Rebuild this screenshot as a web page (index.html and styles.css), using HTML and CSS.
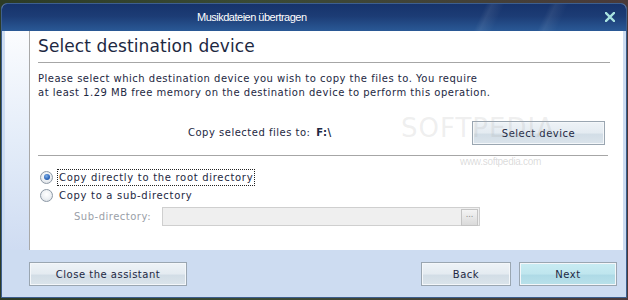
FILE: index.html
```html
<!DOCTYPE html>
<html>
<head>
<meta charset="utf-8">
<link rel="stylesheet" href="styles.css">
</head>
<body>
<div class="window">
  <div class="titlebar">
    <span class="title">Musikdateien übertragen</span>
    <svg class="close" width="10" height="10" viewBox="0 0 10 10"><path d="M1 1 L9 9 M9 1 L1 9" stroke="#a8e2e0" stroke-width="2.4" stroke-linecap="square"/></svg>
  </div>
  <div class="client">
    <div class="upper">
      <div class="strip"></div>
      <div class="panel">
        <h1 class="heading">Select destination device</h1>
        <p class="desc">Please select which destination device you wish to copy the files to. You require<br>at least 1.29 MB free memory on the destination device to perform this operation.</p>
        <div class="target-row">
          <span class="target-label">Copy selected files to: <b class="drive">F:\</b></span>
          <button class="btn btn-select">Select device</button>
        </div>
        <div class="sep"></div>
        <label class="radio-row"><span class="radio checked"></span><span class="focus">Copy directly to the root directory</span></label>
        <label class="radio-row"><span class="radio"></span><span class="radio-text">Copy to a sub-directory</span></label>
        <div class="sub-row">
          <span class="sub-label">Sub-directory:</span>
          <div class="sub-input"><span class="browse">...</span></div>
        </div>
        <div class="wm">SOFTPEDIA</div>
        <div class="wm-url">www.softpedia.com</div>
      </div>
    </div>
    <div class="footer">
      <button class="btn btn-close">Close the assistant</button>
      <div class="nav">
        <button class="btn btn-back">Back</button>
        <button class="btn btn-next">Next</button>
      </div>
    </div>
  </div>
</div>
</body>
</html>
```
FILE: styles.css
```css
html, body {
  margin: 0;
  padding: 0;
}
body {
  width: 628px;
  height: 300px;
  overflow: hidden;
  background: linear-gradient(90deg, #2c3b26 0%, #3a4a35 40%, #4a3a3a 100%);
  font-family: "DejaVu Sans", Verdana, sans-serif;
}
.window {
  margin: 3px 0 0 1px;
  width: 624px;
  height: 293px;
  border: 1px solid #3d5f8f;
  border-radius: 6px 6px 0 0;
  background: #cddcf1;
  display: flex;
  flex-direction: column;
  overflow: hidden;
}
.titlebar {
  position: relative;
  height: 27px;
  flex: none;
  display: flex;
  align-items: center;
  padding-left: 195px;
  background:
    linear-gradient(115deg, transparent 76%, rgba(255,255,255,0.08) 77%, transparent 79%, transparent 86%, rgba(255,255,255,0.07) 87%, transparent 89%),
    linear-gradient(180deg, #16336b 0%, #1c3c75 45%, #2a5996 100%);
}
.title {
  color: #ffffff;
  font-family: "Liberation Sans", Arial, sans-serif;
  font-size: 11px;
  letter-spacing: -0.5px;
  margin-top: -1px;
}
.close {
  position: absolute;
  right: 11px;
  top: 8px;
}
.client {
  flex: 1;
  display: flex;
  flex-direction: column;
  padding: 0 3px 0 3px;
}
.upper {
  display: flex;
  height: 219px;
  flex: none;
}
.strip {
  width: 24px;
  flex: none;
  background: linear-gradient(180deg, #fbfcfe 0%, #e4edf9 50%, #cfdcf2 100%);
}
.panel {
  position: relative;
  flex: 1;
  background: #ffffff;
  border-left: 1px solid #a9a9a9;
  padding: 5px 13px 0 8px;
  color: #1d2842;
  font-size: 10px;
  letter-spacing: 0.5px;
  overflow: hidden;
}
.heading {
  margin: 0;
  font-size: 17px;
  font-weight: normal;
  letter-spacing: 0.1px;
  line-height: 21px;
  padding-bottom: 5px;
  border-bottom: 1px solid #a6a6a6;
  color: #1d2842;
}
.desc {
  margin: 9px 0 0 0;
  line-height: 14px;
  font-size: 10px;
}
.target-row {
  margin-top: 21px;
  display: flex;
  align-items: center;
  height: 24px;
}
.target-label {
  margin-left: 150px;
  line-height: 14px;
}
.drive {
  font-weight: bold;
  margin-left: 2px;
}
.btn {
  font-family: "DejaVu Sans", Verdana, sans-serif;
  font-size: 10px;
  letter-spacing: 0.5px;
  color: #1d2842;
  height: 24px;
  padding: 0;
  border: 1px solid #9aa6b1;
  box-shadow: inset 0 0 0 1px #f4f7fa;
  background: linear-gradient(180deg, #eef3f7 0%, #e4ebf1 50%, #d2dde6 55%, #dbe4eb 100%);
}
.btn-select {
  margin-left: auto;
  margin-right: 5px;
  width: 133px;
}
.sep {
  margin-top: 10px;
  height: 1px;
  background: #a6a6a6;
  margin-right: 2px;
}
.radio-row {
  display: flex;
  align-items: center;
  height: 18px;
  margin-left: 2px;
}
.sep + .radio-row {
  margin-top: 12px;
}
.radio {
  width: 11px;
  height: 11px;
  border-radius: 50%;
  border: 1px solid #8d99a6;
  background: radial-gradient(circle at 50% 40%, #ffffff 0%, #eef1f4 50%, #d4d9df 100%);
  margin-right: 5px;
  display: flex;
  align-items: center;
  justify-content: center;
}
.radio.checked::after {
  content: "";
  width: 6px;
  height: 6px;
  border-radius: 50%;
  background: radial-gradient(circle at 40% 35%, #7fb0e8 0%, #2b64b8 60%, #1a4a96 100%);
}
.focus {
  outline: 1px dotted #222;
  outline-offset: 0px;
  padding: 0 1px;
  line-height: 15px;
  letter-spacing: 0.7px;
}
.radio-text {
  padding: 0 1px;
  letter-spacing: 0.7px;
}
.sub-row {
  margin-top: 3px;
  display: flex;
  align-items: center;
  height: 19px;
}
.sub-label {
  margin-left: 36px;
  width: 88px;
  color: #9aa0a8;
}
.sub-input {
  width: 316px;
  height: 17px;
  border: 1px solid #cfcfcf;
  background: #efefef;
  display: flex;
  justify-content: flex-end;
}
.browse {
  width: 15px;
  height: 15px;
  margin: 1px 1px 0 0;
  border: 1px solid #c4c4c4;
  background: linear-gradient(180deg, #f4f4f4, #dadada);
  color: #8a8a8a;
  font-size: 8px;
  letter-spacing: 0;
  line-height: 9px;
  text-align: center;
}
.wm {
  position: absolute;
  left: 371px;
  top: 82px;
  font-family: "DejaVu Sans", sans-serif;
  font-size: 26px;
  letter-spacing: 1px;
  color: rgba(170,170,170,0.2);
  pointer-events: none;
}
.wm-url {
  position: absolute;
  left: 430px;
  top: 125px;
  font-family: "Liberation Sans", sans-serif;
  font-size: 10px;
  letter-spacing: -0.3px;
  color: rgba(150,150,150,0.35);
  pointer-events: none;
}
.footer {
  flex: 1;
  display: flex;
  align-items: flex-start;
  padding: 12px 6px 0 24px;
}
.btn-close {
  width: 158px;
}
.nav {
  margin-left: auto;
  display: flex;
  gap: 8px;
}
.btn-back {
  width: 90px;
}
.btn-next {
  width: 98px;
  background: linear-gradient(180deg, #c9ecf3 0%, #bfe6ee 50%, #aedae6 55%, #b9e1ea 100%);
}
```
